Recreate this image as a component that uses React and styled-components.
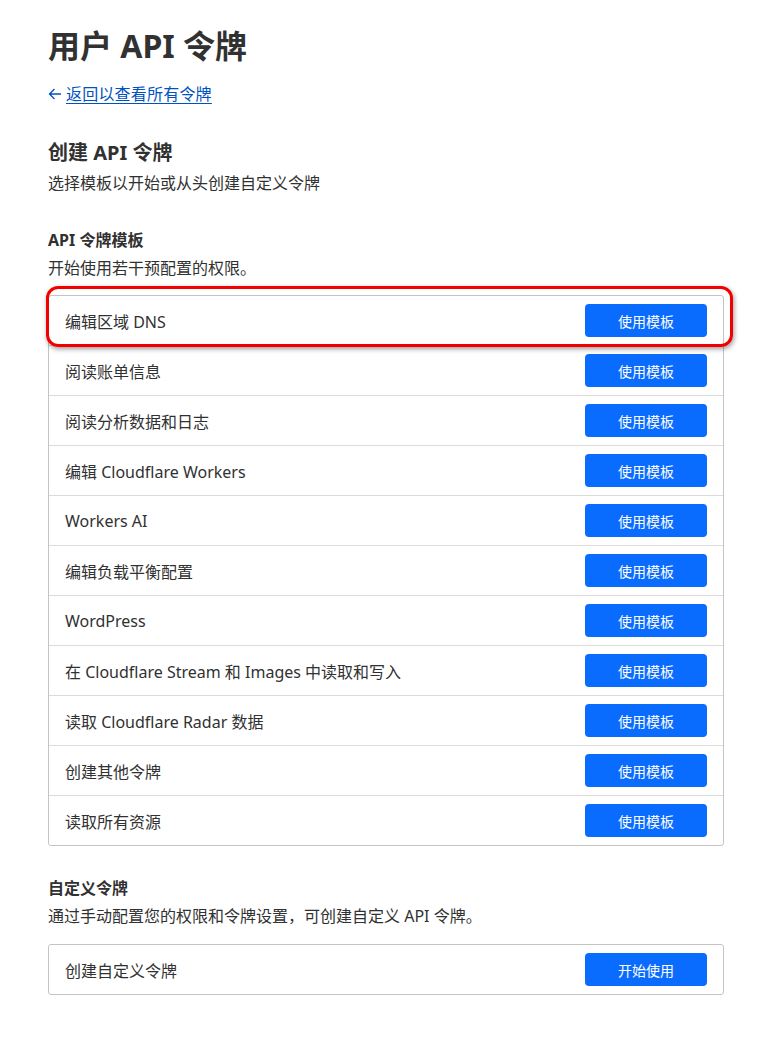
import React from "react";
import styled, { createGlobalStyle } from "styled-components";

const Global = createGlobalStyle`
  body {
    margin: 0;
    background: #fff;
    font-family: "Noto Sans", "Noto Sans CJK SC", sans-serif;
    color: #313131;
  }
`;

const Page = styled.div`
  padding: 26px 46px 40px 48px;
`;

const Title = styled.h1`
  margin: 0;
  font-size: 32px;
  line-height: 40px;
  font-weight: 700;
  color: #313131;
`;

const BackLink = styled.a`
  display: inline-flex;
  align-items: center;
  margin-top: 16px;
  font-size: 16px;
  line-height: 24px;
  color: #0051c3;
  text-decoration: none;
  cursor: pointer;

  span {
    text-decoration: underline;
    text-underline-offset: 3px;
    padding-left: 4px;
    letter-spacing: 0.2px;
  }
`;

const Arrow = styled.svg`
  width: 14px;
  height: 14px;
`;

const Section = styled.section`
  margin-top: ${(p) => p.$top}px;
`;

const Heading = styled.h2`
  margin: 0;
  font-size: ${(p) => (p.$small ? 16 : 20)}px;
  line-height: ${(p) => (p.$small ? 24 : 28)}px;
  font-weight: 700;
`;

const Lead = styled.p`
  margin: 4px 0 0;
  font-size: 16px;
  line-height: 24px;
`;

const ListWrap = styled.div`
  position: relative;
  margin-top: ${(p) => p.$top}px;
`;

const List = styled.div`
  border: 1px solid #c4c4c4;
  border-radius: 3px;
  background: #fff;
`;

const Row = styled.div`
  display: flex;
  align-items: center;
  justify-content: space-between;
  height: 49px;
  padding: 0 16px;
  font-size: 16px;
  & + & {
    border-top: 1px solid #dcdcdc;
  }
`;

const Button = styled.button`
  width: 122px;
  height: 33px;
  border: none;
  border-radius: 4px;
  background: #0a6cff;
  color: #fff;
  font-family: inherit;
  font-size: 14px;
  cursor: pointer;
`;

const Highlight = styled.div`
  position: absolute;
  left: -2px;
  top: -9px;
  width: 687px;
  height: 61px;
  box-sizing: border-box;
  border: 3px solid #f20000;
  border-radius: 12px;
  box-shadow: 1px 2px 5px rgba(0, 0, 0, 0.4);
  pointer-events: none;
`;

const templates = [
  "编辑区域 DNS",
  "阅读账单信息",
  "阅读分析数据和日志",
  "编辑 Cloudflare Workers",
  "Workers AI",
  "编辑负载平衡配置",
  "WordPress",
  "在 Cloudflare Stream 和 Images 中读取和写入",
  "读取 Cloudflare Radar 数据",
  "创建其他令牌",
  "读取所有资源",
];

export default function App() {
  return (
    <Page>
      <Global />
      <Title>用户 API 令牌</Title>
      <BackLink>
        <Arrow viewBox="0 0 14 14" fill="none" stroke="#0051c3" strokeWidth="1.3">
          <path d="M13 7H1.5M6.5 2L1.5 7l5 5" />
        </Arrow>
        <span>返回以查看所有令牌</span>
      </BackLink>

      <Section $top={33}>
        <Heading>创建 API 令牌</Heading>
        <Lead>选择模板以开始或从头创建自定义令牌</Lead>
      </Section>

      <Section $top={33}>
        <Heading $small>API 令牌模板</Heading>
        <Lead>开始使用若干预配置的权限。</Lead>
        <ListWrap $top={15}>
          <List>
            {templates.map((t) => (
              <Row key={t}>
                {t}
                <Button>使用模板</Button>
              </Row>
            ))}
          </List>
          <Highlight />
        </ListWrap>
      </Section>

      <Section $top={30}>
        <Heading $small>自定义令牌</Heading>
        <Lead>通过手动配置您的权限和令牌设置，可创建自定义 API 令牌。</Lead>
        <ListWrap $top={16}>
          <List>
            <Row>
              创建自定义令牌
              <Button>开始使用</Button>
            </Row>
          </List>
        </ListWrap>
      </Section>
    </Page>
  );
}
